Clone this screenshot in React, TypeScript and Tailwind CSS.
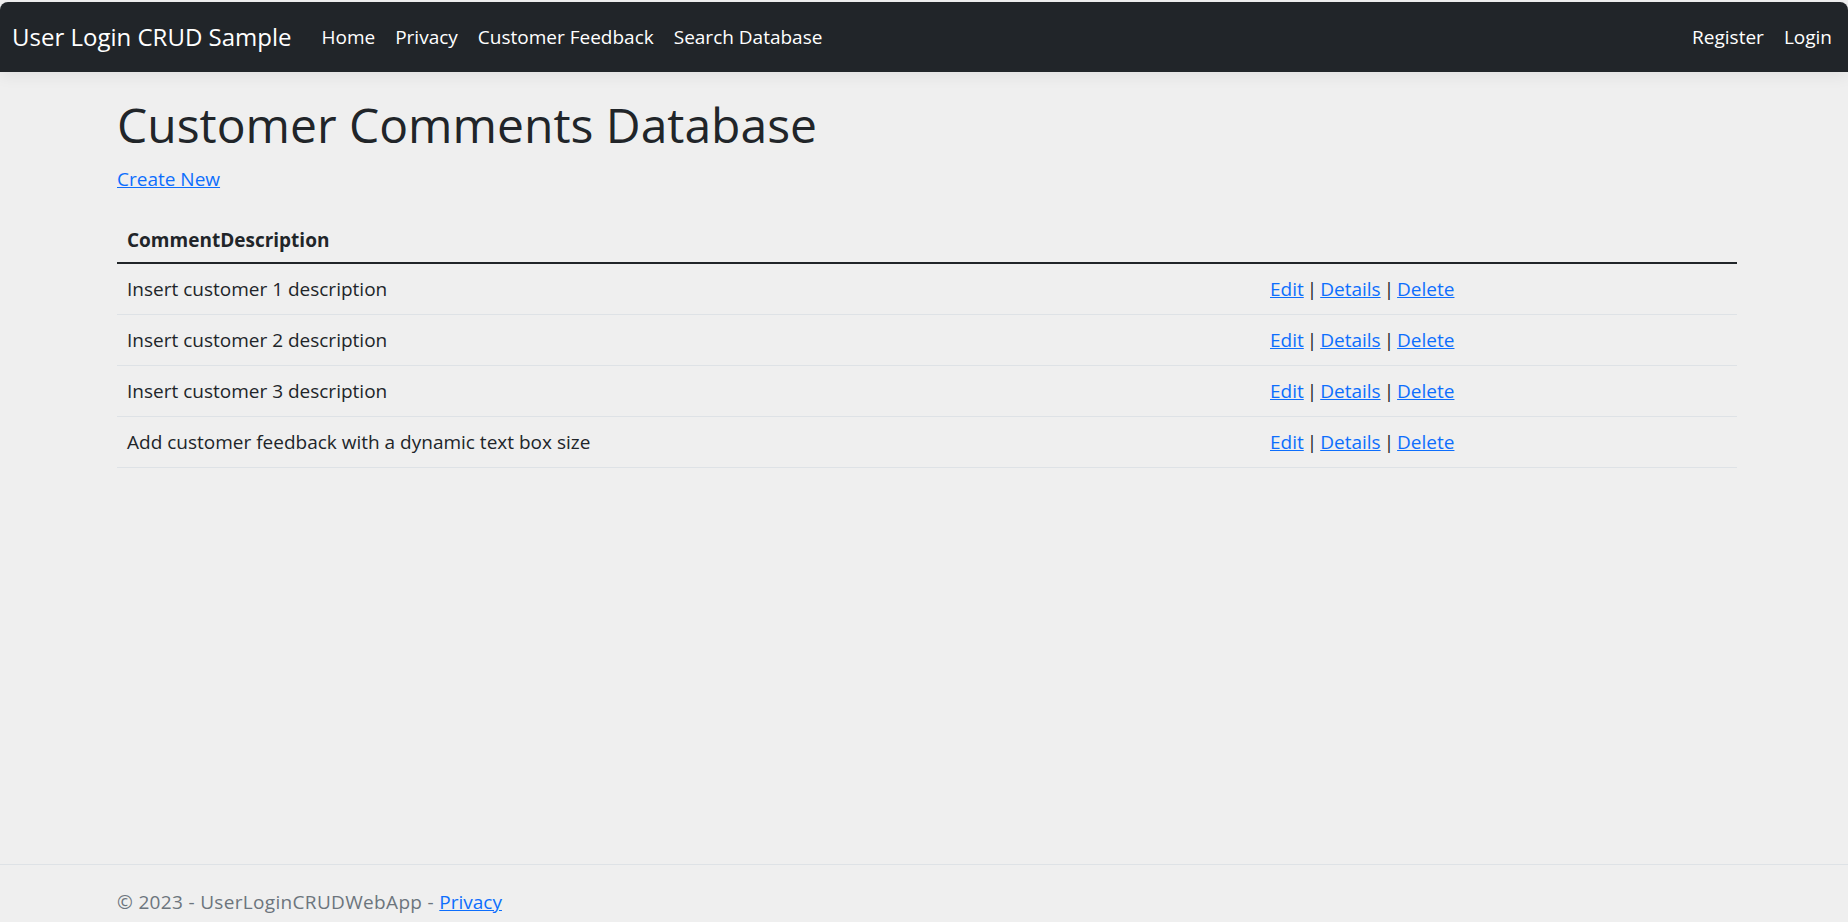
import React from 'react';

const rows = [
    'Insert customer 1 description',
    'Insert customer 2 description',
    'Insert customer 3 description',
    'Add customer feedback with a dynamic text box size',
];

const navLinks = ['Home', 'Privacy', 'Customer Feedback', 'Search Database'];

const Sep = () => <span className="mx-[3px]">|</span>;

const RowActions = () => (
    <span className="whitespace-nowrap">
        <a href="#" className="text-[#0d6efd] underline">Edit</a><Sep />
        <a href="#" className="text-[#0d6efd] underline">Details</a><Sep />
        <a href="#" className="text-[#0d6efd] underline">Delete</a>
    </span>
);

export default function App() {
    return (
        <div className="h-[922px] overflow-hidden bg-[#efefef] text-[#212529] font-['Open_Sans',sans-serif] text-[19px] leading-[30px]">
            <div className="flex flex-col min-h-[939px] pt-[2px]">
                {/* Navbar */}
                <nav className="h-[70px] shrink-0 bg-[#212529] rounded-t-[8px] flex items-center justify-between pl-[12px] pr-[16px] shadow-[0_5px_15px_rgba(0,0,0,0.06)]">
                    <div className="flex items-center">
                        <span className="text-white text-[24px] mr-[20px]">User Login CRUD Sample</span>
                        <ul className="flex items-center">
                            {navLinks.map((link) => (
                                <li key={link}>
                                    <a href="#" className="block px-[10px] text-white">{link}</a>
                                </li>
                            ))}
                        </ul>
                    </div>
                    <ul className="flex items-center">
                        <li><a href="#" className="block px-[10px] text-white">Register</a></li>
                        <li><a href="#" className="block pl-[10px] text-white">Login</a></li>
                    </ul>
                </nav>

                {/* Main */}
                <main className="flex-1 pl-[117px] pt-[22px]">
                    <div className="w-[1620px]">
                        <h1 className="text-[48px] leading-[60px] font-medium mt-[1px] mb-[9px]">Customer Comments Database</h1>
                        <p className="mb-[20px]">
                            <a href="#" className="text-[#0d6efd] underline">Create New</a>
                        </p>
                        <table className="w-full border-collapse">
                            <thead>
                                <tr className="border-b-[2px] border-[#212529]">
                                    <th className="text-left font-bold px-[10px] pt-[11px] pb-[7px] w-[1143px]">CommentDescription</th>
                                    <th className="px-[10px] pt-[11px] pb-[7px]"></th>
                                </tr>
                            </thead>
                            <tbody>
                                {rows.map((row) => (
                                    <tr key={row} className="border-b border-[#dee2e6]">
                                        <td className="px-[10px] py-[10px]">{row}</td>
                                        <td className="px-[10px] py-[10px]"><RowActions /></td>
                                    </tr>
                                ))}
                            </tbody>
                        </table>
                    </div>
                </main>

                {/* Footer */}
                <footer className="h-[75px] shrink-0 border-t border-[#dee2e6] leading-[75px] text-[#6c757d] pl-[117px] whitespace-nowrap tracking-[0.33px]">
                    © 2023 - UserLoginCRUDWebApp - <a href="#" className="text-[#0d6efd] underline tracking-normal">Privacy</a>
                </footer>
            </div>
        </div>
    );
}
